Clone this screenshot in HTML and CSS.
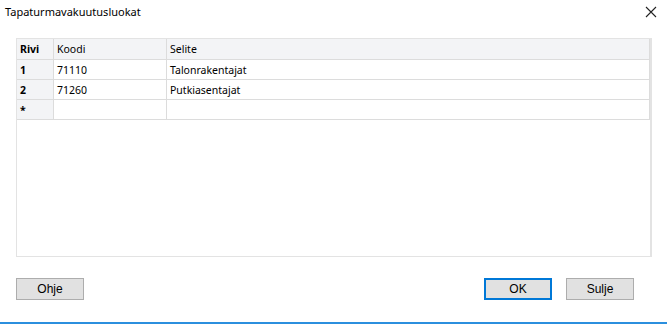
FILE: index.html
```html
<!DOCTYPE html>
<html lang="fi">
<head>
    <meta charset="UTF-8">
    <title>Tapaturmavakuutusluokat</title>
    <link rel="stylesheet" href="styles.css">
</head>
<body>
    <div class="dialog">
        <header class="titlebar">
            <span class="title">Tapaturmavakuutusluokat</span>
            <span class="close">
                <svg width="12" height="12" viewBox="0 0 12 12"><path d="M1 1L11 11M11 1L1 11" stroke="#222" stroke-width="1.1" fill="none"/></svg>
            </span>
        </header>

        <div class="grid">
            <table>
                <thead>
                    <tr><th class="c-row">Rivi</th><th class="c-code">Koodi</th><th class="c-desc">Selite</th></tr>
                </thead>
                <tbody>
                    <tr><td class="c-row">1</td><td>71110</td><td>Talonrakentajat</td></tr>
                    <tr><td class="c-row">2</td><td>71260</td><td>Putkiasentajat</td></tr>
                    <tr><td class="c-row">*</td><td></td><td></td></tr>
                </tbody>
            </table>
        </div>

        <div class="buttons">
            <button>Ohje</button>
            <span class="spacer"></span>
            <button class="default">OK</button>
            <button>Sulje</button>
        </div>
    </div>
</body>
</html>
```

FILE: styles.css
```css
body {
    margin: 0;
    background: #ffffff;
    font-family: "Noto Sans", "Open Sans", sans-serif;
    color: #000;
}

.dialog {
    width: 667px;
    height: 322px;
    border-bottom: 2px solid #2b8fde;
    display: flex;
    flex-direction: column;
}

.titlebar {
    height: 24px;
    display: flex;
    align-items: center;
    justify-content: space-between;
    padding: 0 8px 0 5px;
}

.title {
    font-size: 11px;
    margin-top: -2px;
}

.close {
    display: flex;
    margin-right: 2px;
    margin-top: -1px;
}

.grid {
    margin: 14px 15px 0 16px;
    height: 219px;
    border: 1px solid #e3e3e3;
    border-right: 2px solid #e3e3e3;
    box-sizing: border-box;
    background: #fff;
}

table {
    width: 100%;
    border-collapse: collapse;
    font-size: 10.5px;
}

th, td {
    height: 19px;
    padding: 0 4px 0 3px;
    text-align: left;
    border: 1px solid #dcdcdc;
    border-top: 0;
    border-left: 0;
    font-weight: normal;
    white-space: nowrap;
}

thead th {
    background: #f3f4f6;
    height: 20px;
}

.c-row {
    width: 29px;
    font-weight: bold;
    background: #f3f4f6;
}

.c-code {
    width: 105px;
}

.buttons {
    display: flex;
    gap: 14px;
    padding: 21px 33px 0 16px;
}

.spacer {
    flex: 1;
}

button {
    width: 68px;
    height: 22px;
    background: #e1e1e1;
    border: 1px solid #adadad;
    font-family: "Liberation Sans", Arial, sans-serif;
    font-size: 12px;
    color: #000;
    padding: 0;
}

button.default {
    border: 2px solid #0078d7;
}
```
